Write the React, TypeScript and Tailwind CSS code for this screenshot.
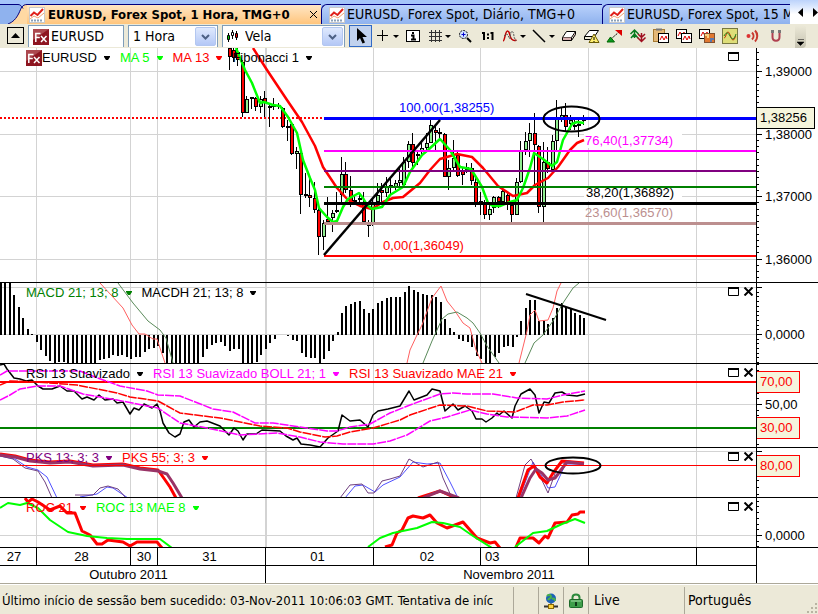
import type { ReactNode } from 'react'

const UI = "font-['DejaVu_Sans_Condensed','Noto_Sans',sans-serif]"
const GRID_X = [36, 130, 157, 265, 373, 480, 588, 696]
const STEP = 4.487

// high, low, body top, body bottom, direction
type Candle = [number, number, number, number, 'u' | 'd']

const CANDLES: Candle[] = [
  [48, 70, 48, 57, 'd'], [48, 62, 50, 58, 'd'], [48, 66, 52, 60, 'd'],
  [60, 117, 62, 113, 'd'], [96, 113, 99, 113, 'u'], [97, 109, 97, 99, 'u'], [97, 111, 98, 107, 'd'],
  [96, 113, 99, 107, 'u'], [91, 117, 98, 103, 'd'], [103, 127, 106, 107, 'u'], [98, 110, 105, 107, 'd'],
  [103, 109, 105, 107, 'd'], [107, 128, 108, 127, 'd'], [120, 141, 126, 127, 'd'], [123, 155, 124, 154, 'd'],
  [147, 169, 151, 154, 'u'], [151, 214, 153, 195, 'd'], [173, 198, 194, 196, 'd'], [176, 207, 195, 198, 'd'],
  [182, 213, 198, 210, 'd'], [203, 255, 210, 237, 'd'], [220, 250, 223, 237, 'u'], [197, 224, 219, 222, 'd'],
  [210, 232, 213, 218, 'u'], [192, 213, 210, 212, 'u'], [157, 203, 174, 195, 'u'], [162, 193, 174, 190, 'd'],
  [176, 207, 190, 202, 'd'], [195, 205, 200, 202, 'u'], [193, 203, 198, 200, 'd'], [192, 222, 203, 222, 'd'],
  [220, 237, 222, 226, 'u'], [200, 226, 203, 225, 'u'], [183, 207, 195, 202, 'u'], [183, 204, 190, 193, 'd'],
  [177, 197, 187, 193, 'u'], [178, 195, 185, 188, 'd'], [180, 190, 183, 187, 'u'], [166, 188, 180, 183, 'u'],
  [157, 185, 162, 185, 'u'], [141, 168, 144, 162, 'u'], [133, 170, 144, 163, 'd'], [152, 165, 154, 156, 'u'],
  [140, 157, 148, 152, 'u'], [133, 150, 143, 148, 'u'], [120, 143, 125, 143, 'u'], [125, 150, 130, 133, 'd'],
  [128, 138, 132, 134, 'd'], [133, 177, 134, 177, 'd'], [160, 190, 168, 177, 'u'], [140, 170, 158, 168, 'u'],
  [152, 177, 155, 176, 'd'], [168, 185, 170, 175, 'd'], [163, 173, 167, 170, 'u'], [163, 185, 168, 181, 'd'],
  [177, 207, 182, 203, 'd'], [192, 215, 201, 202, 'u'], [200, 219, 202, 215, 'd'], [205, 220, 209, 215, 'u'],
  [196, 213, 197, 208, 'u'], [196, 208, 197, 202, 'd'], [188, 203, 191, 202, 'u'], [192, 210, 195, 205, 'd'],
  [203, 222, 205, 215, 'd'], [178, 215, 182, 215, 'u'], [141, 183, 151, 182, 'u'], [132, 155, 141, 150, 'u'],
  [123, 157, 133, 141, 'u'], [113, 185, 133, 145, 'd'], [145, 213, 146, 207, 'd'], [142, 222, 162, 207, 'u'],
  [147, 173, 162, 169, 'd'], [135, 173, 141, 170, 'u'], [100, 150, 118, 141, 'u'], [108, 122, 115, 119, 'u'],
  [103, 132, 115, 127, 'd'], [115, 130, 120, 124, 'u'], [118, 130, 125, 127, 'd'], [120, 137, 124, 126, 'u'],
  [115, 125, 119, 120, 'd'],
]

const MACDH = [
  52, 52, 52, 40, 28, 17, 6, 1, -7, -15, -21, -26, -29, -27, -27, -29, -29, -29, -29, -29, -29, -29,
  -25, -24, -23, -20, -21, -20, -22, -24, -22, -22, -17, -14, -13, -11, -18, -29, -29, -29, -29, -29,
  -29, -29, -29, -22, -14, -10, -8, -7, -11, -16, -14, -14, -29, -29, -29, -27, -20, -14, -8, -4, 0, 0,
  -1, -5, -6, -18, -22, -23, -23, -29, -24, -16, -6, 3, 22, 29, 31, 33, 34, 26, 22, 26, 32, 34, 37, 38,
  38, 38, 43, 49, 45, 43, 41, 40, 40, 38, 33, 16, 7, 3, -4, -6, -7, -12, -21, -24, -29, -29, -22, -18,
  -12, -11, -12, -2, 14, 27, 35, 35, 14, 14, 11, 17, 27, 32, 28, 27, 22, 20, 17,
]

const MA5 =
  '236,48 245,70 252,83 260,103 264,102 273,105 280,106 288,117 297,133 303,160 310,178 315,190 319,208 327,217 333,222 337,221 343,207 348,199 359,193 363,198 367,205 372,209 382,207 390,195 403,187 410,172 422,155 428,150 440,139 450,150 460,167 471,169 482,187 488,203 493,206 500,206 510,202 517,200 523,188 530,168 534,153 543,159 552,166 557,162 563,140 572,124 577,122 584,123'
const MA13 =
  '253,48 267,70 287,100 302,122 315,146 323,167 337,188 348,200 360,206 372,209 383,202 393,198 403,197 420,183 430,170 440,159 457,154 472,157 483,168 498,186 513,196 527,193 535,185 548,178 558,167 570,150 577,143 584,140'

const FIBS = [
  { y: 118.5, w: 3, color: '#0000ff' },
  { y: 151, w: 2, color: '#ff00ff' },
  { y: 171, w: 2, color: '#800080' },
  { y: 187, w: 2, color: '#008000' },
  { y: 203.5, w: 3, color: '#000000' },
  { y: 223.5, w: 3, color: '#bc8f8f' },
  { y: 256, w: 2, color: '#ff0000' },
]

const RSI =
  '0,365 4,364 7,369 14,378 20,379 26,381 32,380 38,386 43,389 52,389 60,386 67,391 74,391 82,399 87,397 94,400 99,395 105,400 113,399 117,403 123,402 130,414 134,408 139,410 144,404 152,408 157,404 160,411 163,423 169,433 175,437 180,434 184,422 189,420 194,427 200,422 207,421 220,426 229,435 234,428 238,431 243,440 247,434 256,434 262,430 280,431 286,436 293,440 297,438 301,444 310,445 320,447 328,438 338,431 342,415 350,421 360,420 368,427 373,415 378,411 388,409 400,406 409,391 414,400 427,395 432,389 440,391 445,411 453,404 458,410 465,406 472,411 476,419 482,419 486,422 492,418 497,413 499,415 504,411 512,418 515,406 521,394 530,389 535,395 539,413 544,402 549,403 555,393 562,392 567,395 577,396 585,394'
const RSI_MAE =
  '0,385 10,381 37,382 77,385 117,393 130,397 158,401 180,413 220,418 260,426 287,428 300,432 325,437 337,436 350,432 373,428 400,420 410,415 440,405 467,406 487,411 515,412 533,405 547,405 563,402 585,400'
const BOLL_UP =
  '0,375 7,371 80,371 95,377 120,386 147,391 158,395 180,396 213,409 233,412 255,423 273,423 300,427 327,431 337,431 350,427 370,424 390,413 410,405 440,394 453,393 467,394 493,394 517,398 547,399 563,395 585,391'
const BOLL_LOW =
  '0,400 10,395 20,389 37,386 60,386 83,394 117,400 147,406 158,408 180,423 207,428 240,435 277,433 300,437 320,442 343,444 373,444 390,441 407,435 430,421 447,417 470,410 487,414 507,417 547,418 567,416 585,410'

const PKS_RED = [
  '0,454 15,456 30,460 50,462 70,461 93,465 123,464 140,468 158,470 163,477 170,487 176,498',
  '418,498 440,491 456,498',
  '518,498 528,470 534,466 540,477 547,483 553,473 562,461 584,463',
]
const PKS_MAROON = [
  '0,455 15,457 30,461 50,463 70,462 93,466 123,465 140,469 158,471 167,474 173,483 182,498',
  '423,498 440,491 459,498',
  '521,498 530,478 536,469 542,473 548,480 555,478 567,462 584,464',
]
const PKS_THIN = [
  '0,456 13,459 25,468 38,471 45,482 52,498',
  '75,495 93,495 100,488 108,486 118,489 126,498',
  '340,498 350,485 362,484 368,493 374,493 382,481 390,479 400,476 409,459 423,467 438,462 443,478 452,498',
  '516,498 525,465 531,459 538,472 548,493 557,468 562,463 584,464',
]
const PKS_BLUE = [
  '0,456 15,459 27,467 38,470 47,477 57,498',
  '80,497 97,494 107,487 113,488 128,498',
  '345,498 355,486 363,485 375,492 383,485 400,477 413,462 427,464 440,463 450,482 458,498',
  '520,496 533,462 543,478 548,488 555,487 565,465 584,465',
]
const ROC = [
  '25,498 28,502 32,499 38,502 50,510 60,506 67,513 75,513 82,531 90,535 97,544 102,544 108,540 123,542 130,546 137,542 157,542 162,548',
  '385,547 392,545 397,533 402,530 408,518 413,516 423,518 430,515 437,523 447,528 463,522 477,538 490,543 495,542 500,548',
  '516,547 520,538 533,538 539,543 545,536 548,538 555,523 567,522 572,515 578,514 580,512 585,512',
]
const ROC_MAE = [
  '0,508 8,503 20,505 27,503 38,508 50,520 68,532 87,536 107,538 127,539 160,539 172,548',
  '368,547 380,538 393,533 417,528 432,522 443,523 460,527 473,536 492,548',
  '515,547 533,533 547,531 562,524 575,519 585,523',
]

const DAYS = [
  ['27', 'w-[37px] pr-2'], ['28', 'w-[94px] pr-1'], ['30', 'w-[27px]'], ['31', 'w-[108px] pr-1'],
  ['01', 'w-[108px] pr-1'], ['02', 'w-[107px]'], ['03', 'w-[108px] text-left pl-1'], ['', 'w-[108px]'],
]

function Line({ points, color, width = 1, dash }: { points: string; color: string; width?: number; dash?: string }) {
  return <polyline points={points} fill="none" stroke={color} strokeWidth={width} strokeDasharray={dash} strokeLinejoin="round" />
}

function Grid({ rows }: { rows: number[] }) {
  return (
    <g stroke="#d3d3d3" shapeRendering="crispEdges">
      {GRID_X.map((x) => (
        <line key={x} x1={x + 0.5} x2={x + 0.5} y1="0" y2="614" strokeWidth={x === 265 ? 2 : 1} />
      ))}
      {rows.map((y) => (
        <line key={y} x1="0" x2="100%" y1={y + 0.5} y2={y + 0.5} />
      ))}
    </g>
  )
}

type Tag = { y: number; text: string; color: string; w: number }

function Axis({ top, zero, step, end, labels, tags = [] }: {
  top: number
  zero: number
  step: number
  end: number
  labels: { y: number; text: string }[]
  tags?: Tag[]
}) {
  const ticks: number[] = []
  for (let y = zero; y > top; y -= step) ticks.push(y)
  for (let y = zero + step; y < end; y += step) ticks.push(y)
  return (
    <svg className="block h-full w-[62px] shrink-0 border-l border-black" fontSize="13" fontFamily="Liberation Sans, sans-serif">
      <g transform={`translate(0 ${-top})`}>
        {ticks.map((y) => (
          <rect key={y} x="0" y={Math.round(y)} width="2" height="1" />
        ))}
        {labels.map((l) => (
          <g key={l.y}>
            <rect x="0" y={l.y} width="5" height="1" />
            <text x="8" y={l.y + 5}>{l.text}</text>
          </g>
        ))}
        {tags.map((t) => (
          <g key={t.y}>
            <rect x="-0.5" y={t.y - 10.5} width={t.w} height="21" fill="#f5f5dc" stroke={t.color} />
            <text x="3" y={t.y + 4} fill={t.color}>{t.text}</text>
          </g>
        ))}
      </g>
    </svg>
  )
}

function Legend({ text, className = '', icon }: { text: string; className?: string; icon?: ReactNode }) {
  return (
    <button className={`flex items-center gap-[7px] whitespace-nowrap ${className}`}>
      <span className="flex items-center">{icon}{text}</span>
      <svg width="6" height="4" fill="currentColor"><path d="M0 0h6v1L4 4H2L0 1z" /></svg>
    </button>
  )
}

function Panel({ top, height, legend, closable = true, axis, children }: {
  top: number
  height: string
  legend: ReactNode
  closable?: boolean
  axis: ReactNode
  children: ReactNode
}) {
  return (
    <section className={`flex border-b border-black ${height}`}>
      <div className="relative min-w-0 flex-1 overflow-hidden">
        <svg className="absolute inset-0 h-full w-full" fontSize="13" fontFamily="Liberation Sans, sans-serif">
          <g transform={`translate(0 ${-top})`}>{children}</g>
        </svg>
        <div className="relative flex items-start justify-between pr-0.5">
          <div className="flex h-5 items-center gap-2.5 pl-[26px]">{legend}</div>
          <div className="flex gap-1 pt-1">
            <button aria-label="Maximizar">
              <svg className="block" width="11" height="9"><path d="M.5 1h10v7.500H.5z" fill="#fff" stroke="#000" /><path d="M0 1h11" stroke="#000" strokeWidth="2" /></svg>
            </button>
            {closable ? (
              <button aria-label="Fechar">
                <svg className="block" width="11" height="9" stroke="#000" strokeWidth="2"><path d="M1.500 .5l8 8M9.500 .5l-8 8" /></svg>
              </button>
            ) : <span className="w-[11px]" />}
          </div>
        </div>
      </div>
      {axis}
    </section>
  )
}

function FxIcon() {
  return (
    <svg className="shrink-0" width="16" height="16">
      <rect width="16" height="16" fill="#8e1520" />
      <path d="M0 0h16L0 11z" fill="#c06a70" opacity=".6" />
      <g stroke="#fff" strokeWidth="1.500" fill="none"><path d="M2.800 13V4.500h4.700M2.800 8.500h4" /><path d="M8 7l5.500 6M13.500 7L8 13" /></g>
    </svg>
  )
}

function ChartIcon() {
  return (
    <svg className="shrink-0" width="16" height="16">
      <rect x=".5" y=".5" width="15" height="15" fill="#fff" stroke="#c9c9c9" />
      <path d="M1 12l4-3 4 2 6-5" fill="none" stroke="#f0a070" />
      <path d="M1.500 9L5 5.500 8.500 8l5.500-6" fill="none" stroke="#e0211a" strokeWidth="2" />
      <path d="M2 13.500h12" stroke="#8aa0b8" strokeDasharray="2 1" strokeWidth="2" />
    </svg>
  )
}

function Chevron() {
  return (
    <span className="pointer-events-none absolute inset-y-px right-px flex w-[21px] items-center justify-center rounded-xs border border-[#b3c7f0] bg-linear-to-b from-[#dfe9fd] to-[#b4c8f6]">
      <svg width="9" height="6"><path d="M1 1l3.500 3.500L8 1" fill="none" stroke="#4d6185" strokeWidth="2" /></svg>
    </span>
  )
}

function Tool({ label, children, menu = false, active = false }: { label: string; children: ReactNode; menu?: boolean; active?: boolean }) {
  return (
    <button
      aria-label={label}
      className={`flex h-[22px] shrink-0 items-center justify-center ${menu ? 'w-[29px] gap-px' : 'w-[23px]'} ${active ? 'border border-[#316ac5] bg-[#c1d2ee]' : ''}`}
    >
      <svg className="shrink-0" width="18" height="18" fill="none" stroke="#000">{children}</svg>
      {menu && <svg className="shrink-0" width="6" height="3"><path d="M0 0h6L3 3z" /></svg>}
    </button>
  )
}

function MiniWindow({ x, y }: { x: number; y: number }) {
  return (
    <g>
      <rect x={x + 0.5} y={y + 0.5} width="10" height="9" fill="#fff" />
      <path d={`M${x + 2} ${y + 7}l2-4 2 4 2-4 1 3`} stroke="#e00000" />
    </g>
  )
}

function TabBar() {
  return (
    <div className={`flex h-6 items-end overflow-hidden bg-[#a5c5fa] text-[14px] ${UI}`}>
      <svg className="h-5 w-[27px] shrink-0" viewBox="0 0 27 20">
        <path d="M0 0h20l3 5-9 15H0z" fill="#8fb2ee" />
        <path d="M27 0c-4 0-5 3-8 9-3 5-6 9-11 11h19z" fill="#ffd9a3" />
        <path d="M0 .5h18c2 0 3 1 5 4M27 .5c-5 0-6 4-8 8.500-3 6-6 9-11 11" fill="none" stroke="#000080" />
      </svg>
      <button className="flex h-5 w-[294px] shrink-0 items-center gap-[3px] border-t border-[#000080] bg-linear-to-b from-[#ffe6c4] to-[#ffc57c] pl-[2px] text-[13px] font-bold whitespace-nowrap">
        <ChartIcon />
        <span className="flex-1 text-left">EURUSD, Forex Spot, 1 Hora, TMG+0</span>
        <svg className="mr-[3px] shrink-0" width="9" height="9" stroke="#000"><path d="M1 1l7 7M8 1L1 8" /></svg>
      </button>
      <button className="flex h-5 w-[281px] shrink-0 items-center gap-0.5 rounded-tl-md border-t border-l border-[#000080] bg-linear-to-b from-[#b9d1fb] to-[#8fb2ee] pl-[7px] whitespace-nowrap">
        <ChartIcon />
        EURUSD, Forex Spot, Diário, TMG+0
      </button>
      <button className="flex h-5 min-w-0 flex-1 items-center gap-0.5 overflow-hidden rounded-tl-md border-t border-l border-[#000080] bg-linear-to-b from-[#b9d1fb] to-[#8fb2ee] pl-[6px] whitespace-nowrap">
        <ChartIcon />
        EURUSD, Forex Spot, 15 M
      </button>
      <div className="flex h-6 w-7 shrink-0 items-center justify-between bg-linear-to-b from-[#bcd3fb] to-white to-60% pl-2">
        <button aria-label="Anterior"><svg className="block" width="5" height="9"><path d="M5 0v9L0 4.500z" /></svg></button>
        <button aria-label="Seguinte"><svg className="block" width="5" height="9"><path d="M0 0v9l5-4.500z" /></svg></button>
      </div>
    </div>
  )
}

function Toolbar() {
  return (
    <div className={`flex h-6 items-start overflow-hidden bg-[#ece9d8] pt-px pl-[7px] text-[14px] ${UI}`}>
      <button aria-label="Recolher" className="mt-0.5 mr-1 flex h-[17px] w-[17px] shrink-0 items-center justify-center border border-black">
        <svg width="9" height="5"><path d="M0 5h9L4.500 0z" /></svg>
      </button>
      <label className="mr-1 flex h-[22px] w-24 shrink-0 items-center gap-0.5 border border-b-0 border-[#7f9db9] bg-white pl-1">
        <FxIcon />
        <input aria-label="Símbolo" defaultValue="EURUSD" className="w-full min-w-0 outline-none" />
      </label>
      <div className="relative mr-1 h-[22px] w-[90px] shrink-0 border border-b-0 border-[#7f9db9] bg-white">
        <select aria-label="Intervalo" className="h-full w-full appearance-none pl-1 outline-none">
          <option>1 Hora</option>
        </select>
        <Chevron />
      </div>
      <div className="relative mr-1 h-[22px] w-[123px] shrink-0 border border-b-0 border-[#7f9db9] bg-white">
        <svg className="absolute top-1 left-1" width="12" height="12">
          <path d="M1.500 3v9M5.500 0v9M9.500 1v9" stroke="#000" />
          <path d="M.5 5.500h2v4h-2z" fill="#0c0" stroke="#000" /><path d="M4.500 2.500h2v3h-2z" fill="#fff" stroke="#000" /><path d="M8.500 3.500h2v4h-2z" fill="#e00" stroke="#000" />
        </svg>
        <select aria-label="Tipo de gráfico" className="h-full w-full appearance-none pl-[22px] outline-none">
          <option>Vela</option>
        </select>
        <Chevron />
      </div>
      <Tool label="Selecionar" active><path d="M5 1v13l3-3 2.500 5.500 2.500-1L10.500 10H15z" fill="#000" stroke="none" /></Tool>
      <Tool label="Cruz" menu><path d="M8.500 3v11M3 8.500h11" /></Tool>
      <Tool label="Informação"><rect x="2.500" y="3.500" width="13" height="11" fill="#fff" /><path d="M8 6h2M7 8.500h2.500V12M7 12.500h5" strokeWidth="2" /></Tool>
      <Tool label="Grelha" menu><path d="M5.500 3v12M9.500 3v12M13.500 3v12M3 5.500h13M3 9.500h13M3 13.500h13" stroke="#333" /></Tool>
      <Tool label="Ampliar"><circle cx="7.500" cy="7.500" r="4" fill="#cfe0ff" strokeDasharray="2 1" /><path d="M5.500 7.500h4M7.500 5.500v4" stroke="#00c" /><path d="M11 11l4 4" strokeWidth="2" /></Tool>
      <Tool label="Escala 1:1"><path d="M3 6h2.500M5 5v8M11.500 6H14M13.500 5v8M9 6.500v2M9 10v2" strokeWidth="2" /></Tool>
      <Tool label="Indicadores" menu><path d="M2 14c2 0 2-10 4.500-10s2 6 4 8 3 2 5 1" stroke="#c00000" strokeWidth="1.500" /><path d="M3 9l3-2 3 5 1-7c2-2 3 2 3 5l2 4" stroke="#555" strokeDasharray="2 1" /></Tool>
      <Tool label="Linha" menu><path d="M3 3l12 12" strokeWidth="1.500" /></Tool>
      <Tool label="Apagar"><path d="M2.500 10.500l4-6h9l-4 6z" fill="#fff" /><path d="M2.500 10.500v3h9v-3M11.500 13.500l4-6v-3" fill="#d9b0b0" /></Tool>
      <Tool label="Apagar tudo"><path d="M1.500 9.500l5-6h9l-4 6z" fill="#fff" /><path d="M1.500 9.500v3h8" /><path d="M11 7l5 8.500H6z" fill="#ffef70" stroke="#6a5a00" /><path d="M11 10v3M11 14v1" /></Tool>
      <Tool label="Segmento"><path d="M5 12l8-7" strokeDasharray="2 1" /><path d="M9 3h7v6z" fill="#d00" stroke="none" /><path d="M4.500 10l4 5H1z" fill="#0a9a20" stroke="#060" /></Tool>
      <Tool label="Sinais"><path d="M5.500 11V3M1.500 7l4-4 4 4M2 11l3.500-4L9 11" stroke="#0a7a20" strokeWidth="1.500" /><path d="M12.500 6v9M8.500 10.500l4 4 4-4M9 7l3.500 3.500L16 7" stroke="#a01020" strokeWidth="1.500" /></Tool>
      <Tool label="Colar"><rect x="1.500" y="2.500" width="11" height="12" fill="#e4b878" stroke="#a87a30" /><path d="M4 2.500h6" stroke="#777" strokeWidth="2" /><MiniWindow x={6} y={6} /></Tool>
      <Tool label="Copiar"><MiniWindow x={1} y={2} /><MiniWindow x={6} y={6} /></Tool>
      <Tool label="Copiar imagem"><MiniWindow x={1} y={2} /><rect x="6.500" y="6.500" width="10" height="9" fill="#e07830" stroke="#805030" /><path d="M7 8h3v3" stroke="#f8d080" strokeWidth="2" /><path d="M13 15v-3h3" stroke="#5a78b0" strokeWidth="2" /></Tool>
      <Tool label="Padrões"><rect x="1.500" y="1.500" width="15" height="15" fill="#dede78" stroke="#777740" /><path d="M3 11c2 0 2-6 4-6s3 8 5 8 2-4 3-4" stroke="#c03000" /><path d="M3 9c2-4 4-4 6 0s4 4 6-2" stroke="#208020" /></Tool>
      <Tool label="Alerta"><circle cx="4.500" cy="9" r="2" fill="#d33" stroke="none" /><path d="M8 5.500c2 2 2 5 0 7M11 3.500c3 3 3 8 0 11" stroke="#c8392f" strokeWidth="2" /></Tool>
      <Tool label="Íman"><path d="M5.500 4v6c0 5 7 5 7 0V4" stroke="#b04050" strokeWidth="2" /><path d="M4 4.500h3M11 4.500h3" stroke="#777" strokeWidth="3" /></Tool>
      <button aria-label="Mais" className="ml-2 flex h-full w-[11px] shrink-0 items-end rounded-r-sm bg-linear-to-b from-[#ece9d8] to-[#c5c2b0] px-0.5 pb-0.5">
        <svg width="7" height="7"><path d="M1 .5h6M0 3h7L3.500 6.500z" stroke="#000" strokeWidth=".5" /></svg>
      </button>
    </div>
  )
}

function PricePanel() {
  return (
    <Panel
      top={48}
      height="h-[235px]"
      closable={false}
      legend={
        <>
          <Legend text="EURUSD" icon={<FxIcon />} />
          <Legend text="MA 5" className="text-[#00ff00]" />
          <Legend text="MA 13" className="text-[#ff0000]" />
          <Legend text="Fibonacci 1" />
        </>
      }
      axis={
        <Axis
          top={48} end={282} zero={71} step={6.25}
          labels={[{ y: 71, text: '1,39000' }, { y: 134, text: '1,38000' }, { y: 196, text: '1,37000' }, { y: 259, text: '1,36000' }]}
          tags={[{ y: 118, text: '1,38256', color: '#000', w: 58 }]}
        />
      }
    >
      <Grid rows={[71, 134, 196, 259]} />
      <rect x="584" y="130" width="98" height="18" fill="#fff" />
      <rect x="584" y="189" width="98" height="12" fill="#fff" />
      <line x1="0" x2="324" y1="118" y2="118" stroke="#f00" strokeWidth="2" strokeDasharray="2 2" />
      <g shapeRendering="crispEdges">
        {CANDLES.map(([high, low, bodyTop, bodyBottom, dir], i) => {
          const x = Math.round(228.5 + i * STEP)
          return (
            <g key={i}>
              <rect x={x} y={high} width="1" height={low - high} />
              <rect x={x - 1} y={bodyTop} width="4" height={Math.max(bodyBottom - bodyTop, 2)} />
              <rect x={x} y={bodyTop + 1} width="2" height={Math.max(bodyBottom - bodyTop - 2, 0)} fill={dir === 'u' ? '#90ee90' : '#ff0000'} />
            </g>
          )
        })}
      </g>
      <Line points={MA13} color="#ff0000" width={2.5} />
      <Line points={MA5} color="#00ff00" width={2.5} />
      <text x="586" y="197">38,20(1,36892)</text>
      {FIBS.map((f) => (
        <line key={f.y} x1="324" x2="100%" y1={f.y} y2={f.y} stroke={f.color} strokeWidth={f.w} />
      ))}
      <path d="M324 255L440 120" stroke="#000" strokeWidth="2.500" />
      <ellipse cx="571.5" cy="119" rx="28" ry="12.5" fill="none" stroke="#000" strokeWidth="2" />
      <text x="399" y="112" fill="#0000ff">100,00(1,38255)</text>
      <text x="585" y="145" fill="#ff00ff">76,40(1,37734)</text>
      <text x="585" y="217" fill="#bc8f8f">23,60(1,36570)</text>
      <text x="383" y="250" fill="#ff0000">0,00(1,36049)</text>
    </Panel>
  )
}

function MacdPanel() {
  return (
    <Panel
      top={283}
      height="h-[81px]"
      legend={
        <>
          <Legend text="MACD 21; 13; 8" className="text-[#008000]" />
          <Legend text="MACDH 21; 13; 8" />
        </>
      }
      axis={<Axis top={283} end={363} zero={334} step={4.7} labels={[{ y: 287, text: '' }, { y: 334, text: '0,0000' }]} />}
    >
      <Grid rows={[287, 334]} />
      <g shapeRendering="crispEdges">
        {MACDH.map((v, i) => (
          <rect key={i} x={Math.round(i * STEP)} y={v > 0 ? 335 - v : 335} width="2" height={Math.abs(v)} />
        ))}
      </g>
      <Line color="#ff6060" points="100,283 123,308 132,325 139,334 145,334 153,339 157,339 165,363" />
      <Line color="#5a8a5a" points="118,283 133,303 148,321 160,330 166,338 173,363" />
      <Line color="#ff6060" points="407,363 410,350 417,335 422,325 432,298 441,286 447,301 455,311 463,323 470,328 476,350 482,363" />
      <Line color="#5a8a5a" points="423,363 432,341 442,319 448,314 457,312 467,318 473,323 480,333 487,346 499,363" />
      <Line color="#ff6060" points="519,363 527,331 530,315 535,310 539,321 548,320 553,308 557,291 561,283" />
      <Line color="#5a8a5a" points="525,363 534,343 543,335 553,321 563,303 573,288 579,283" />
      <path d="M526 294L606 320" stroke="#000" strokeWidth="2" />
    </Panel>
  )
}

function RsiPanel() {
  return (
    <Panel
      top={364}
      height="h-[84px]"
      legend={
        <>
          <Legend text="RSI 13 Suavizado" />
          <Legend text="RSI 13 Suavizado BOLL 21; 1" className="text-[#ff00ff]" />
          <Legend text="RSI 13 Suavizado MAE 21" className="text-[#ff0000]" />
        </>
      }
      axis={
        <Axis
          top={364} end={447} zero={404} step={5.7}
          labels={[{ y: 404, text: '50,00' }]}
          tags={[{ y: 382, text: '70,00', color: '#f00', w: 43 }, { y: 428, text: '30,00', color: '#f00', w: 43 }]}
        />
      }
    >
      <Grid rows={[404]} />
      <line x1="0" x2="100%" y1="382" y2="382" stroke="#ff0000" strokeWidth="2" />
      <line x1="0" x2="100%" y1="428" y2="428" stroke="#008000" strokeWidth="2" />
      <Line points={RSI} color="#000" width={1.5} />
      <Line points={BOLL_UP} color="#ff00ff" width={1.5} dash="9 1" />
      <Line points={BOLL_LOW} color="#ff00ff" width={1.5} dash="9 1" />
      <Line points={RSI_MAE} color="#ff0000" width={1.5} dash="9 1" />
    </Panel>
  )
}

function PksPanel() {
  return (
    <Panel
      top={448}
      height="h-[50px]"
      legend={
        <>
          <Legend text="PKS 13; 3; 3" className="text-[#800080]" />
          <Legend text="PKS 55; 3; 3" className="text-[#ff0000]" />
        </>
      }
      axis={
        <Axis top={448} end={497} zero={451} step={7.2} labels={[{ y: 451, text: '' }]} tags={[{ y: 466, text: '80,00', color: '#f00', w: 43 }]} />
      }
    >
      <Grid rows={[451]} />
      {PKS_BLUE.map((p) => <Line key={p} points={p} color="#5050ff" />)}
      {PKS_THIN.map((p) => <Line key={p} points={p} color="#704080" />)}
      {PKS_RED.map((p) => <Line key={p} points={p} color="#ff0000" width={3} />)}
      {PKS_MAROON.map((p) => <Line key={p} points={p} color="#993366" width={3} />)}
      <rect x="0" y="465" width="100%" height="1" fill="#ff0000" shapeRendering="crispEdges" />
      <ellipse cx="573" cy="465.5" rx="27.5" ry="8" fill="none" stroke="#000" strokeWidth="2" />
    </Panel>
  )
}

function RocPanel() {
  return (
    <Panel
      top={498}
      height="h-[50px]"
      legend={
        <>
          <Legend text="ROC 21" className="text-[#ff0000]" />
          <Legend text="ROC 13 MAE 8" className="text-[#00ff00]" />
        </>
      }
      axis={<Axis top={498} end={547} zero={535} step={5.7} labels={[{ y: 535, text: '0,0000' }]} />}
    >
      <Grid rows={[535]} />
      {ROC.map((p) => <Line key={p} points={p} color="#ff0000" width={3} />)}
      {ROC_MAE.map((p) => <Line key={p} points={p} color="#00ff00" width={2} />)}
    </Panel>
  )
}

function TimeAxis() {
  return (
    <div className="flex h-9 border-b border-[#aca899] leading-[17px]">
      <div className="min-w-0 flex-1 overflow-hidden text-center">
        <div className="flex h-[18px] border-b border-black">
          {DAYS.map(([day, width]) => (
            <div key={width + day} className={`shrink-0 border-r border-black ${width}`}>{day}</div>
          ))}
        </div>
        <div className="flex h-[17px]">
          <div className="w-[266px] shrink-0 border-r border-black pr-2">Outubro 2011</div>
          <div className="flex-1 pr-1">Novembro 2011</div>
        </div>
      </div>
      <div className="w-[62px] shrink-0 border-l border-black" />
    </div>
  )
}

function StatusBar() {
  return (
    <footer className={`flex h-[30px] items-stretch border-t border-white bg-[#ece9d8] pt-0.5 text-[14px] leading-[27px] whitespace-nowrap ${UI}`}>
      <div className="w-[514px] overflow-hidden border-r border-[#aca899] pl-0.5 text-[13px]">
        Último início de sessão bem sucedido: 03-Nov-2011 10:06:03 GMT. Tentativa de iníc
      </div>
      <div className="w-[25px] border-r border-[#aca899]" />
      <div className="flex w-[25px] items-center justify-center border-r border-[#aca899]">
        <svg width="14" height="16">
          <circle cx="7" cy="5.500" r="5" fill="#1c62b8" />
          <path d="M3 3c2-2 4-1 4 1s-2 1-3 3M8 6c2-1 3 0 3 2" stroke="#49b04a" strokeWidth="2" fill="none" />
          <path d="M7 10.500v2M0 13.500h14" stroke="#333" strokeWidth="2" />
          <rect x="4.500" y="11.500" width="5" height="4" fill="#ffd640" stroke="#8a6a00" />
        </svg>
      </div>
      <div className="flex w-[25px] items-center justify-center border-r border-[#aca899]">
        <svg width="14" height="15">
          <path d="M3.500 7V4.500c0-4 7-4 7 0V7" fill="none" stroke="#2c8a3c" strokeWidth="2" />
          <rect x=".5" y="6.500" width="13" height="8" rx="1" fill="#3f9e4a" stroke="#1d6a2a" />
          <path d="M2 8h10" stroke="#a8dca8" /><path d="M7 9v4" stroke="#103a18" strokeWidth="2" />
        </svg>
      </div>
      <div className="w-24 border-r border-[#aca899] pl-[5px]">Live</div>
      <div className="flex-1 pl-[3px]">Português</div>
      <svg className="self-end" width="13" height="13" fill="#b8b4a2"><path d="M10 2h2v2h-2zM6 6h2v2H6zM10 6h2v2h-2zM2 10h2v2H2zM6 10h2v2H6zM10 10h2v2h-2z" /></svg>
    </footer>
  )
}

export default function App() {
  return (
    <div className="flex min-h-screen flex-col overflow-hidden bg-white text-black">
      <TabBar />
      <Toolbar />
      <main className="flex-1 font-['Liberation_Sans',sans-serif] text-[13px]">
        <PricePanel />
        <MacdPanel />
        <RsiPanel />
        <PksPanel />
        <RocPanel />
        <TimeAxis />
      </main>
      <StatusBar />
    </div>
  )
}
